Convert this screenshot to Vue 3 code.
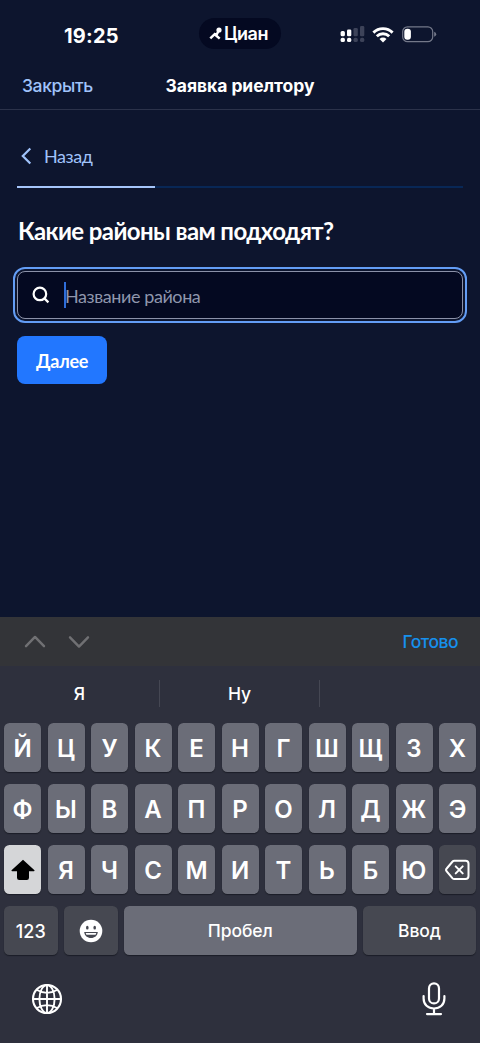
<script setup>
const rows = [
  [...'ЙЦУКЕНГШЩЗХ'],
  [...'ФЫВАПРОЛДЖЭ'],
]
const lastRow = [...'ЯЧСМИТЬБЮ']
</script>

<template>
  <div class="phone">
    <header class="status">
      <span class="time">19:25</span>
      <div class="island">
        <svg width="15" height="14" viewBox="0 0 15 14">
          <path d="M1.3 11.400 5.700 7.200l5 4.400M5.600 7.300h2.200L9.800 3.500" fill="none" stroke="#fff" stroke-width="2.500" />
          <circle cx="10" cy="3" r="2.600" fill="#fff" />
        </svg>
        <span>Циан</span>
      </div>
      <div class="indicators">
        <svg class="signal" width="25" height="17" viewBox="0 0 25 17">
          <g fill="#fff">
            <rect x=".6" y="5" width="4.3" height="5.2" rx="1.5" />
            <rect x="7" y="3.5" width="4.3" height="6.7" rx="1.3" />
            <rect x=".6" y="11.8" width="4.3" height="4.3" rx="1.7" />
            <rect x="7" y="11.8" width="4.3" height="4.3" rx="1.7" />
          </g>
          <g fill="#3d4359">
            <rect x="13.5" y="2" width="4.3" height="8.2" rx="1.3" />
            <rect x="20" y=".1" width="4.3" height="10.1" rx="1.3" />
            <rect x="13.5" y="11.8" width="4.3" height="4.3" rx="1.7" />
            <rect x="20" y="11.8" width="4.3" height="4.3" rx="1.7" />
          </g>
        </svg>
        <svg class="wifi" width="22" height="16" viewBox="0 0 22 16">
          <g fill="none" stroke="#fff" stroke-width="2.9">
            <path d="M1.4 5.6a13.7 13.7 0 0 1 19.2 0" />
            <path d="M4.8 9.3a8.8 8.8 0 0 1 12.4 0" />
          </g>
          <path d="M11 15.6 7.5 12a5 5 0 0 1 7 0z" fill="#fff" />
        </svg>
        <svg class="battery" width="35" height="17" viewBox="0 0 35 17">
          <rect x=".7" y=".8" width="30" height="14.9" rx="4.8" fill="none" stroke="#737889" stroke-width="1.2" />
          <path d="M32.2 5.8q2 .8 2 2.5t-2 2.5z" fill="#737889" />
          <rect x="2.3" y="2.7" width="6.6" height="11" rx="3" fill="#fff" />
        </svg>
      </div>
    </header>

    <nav class="nav">
      <span class="close">Закрыть</span>
      <h1>Заявка риелтору</h1>
    </nav>

    <main class="content">
      <div class="back">
        <svg width="12" height="18" viewBox="0 0 12 18"><path d="M10.300 1.500 2.800 9l7.500 7.500" fill="none" stroke="#a0c3fb" stroke-width="2.2" /></svg>
        <span>Назад</span>
      </div>
      <div class="progress"><div class="done"></div></div>
      <h2>Какие районы вам подходят?</h2>
      <div class="field">
        <svg width="18" height="18" viewBox="0 0 18 18"><g fill="none" stroke="#fff" stroke-width="2.200"><circle cx="7.9" cy="7.9" r="6.3" /><path d="m12.4 12.4 4 4" /></g></svg>
        <i class="caret"></i>
        <span class="hint">Название района</span>
      </div>
      <button class="next">Далее</button>
    </main>

    <section class="keyboard">
      <div class="toolbar">
        <svg width="66" height="16" viewBox="0 0 66 16">
          <g fill="none" stroke="#707073" stroke-width="2.400" stroke-linecap="round" stroke-linejoin="round">
            <path d="m2 12.2 9-9.3 9 9.3M46 3.300l9 9.3 9-9.3" />
          </g>
        </svg>
        <span>Готово</span>
      </div>
      <div class="suggestions"><span>Я</span><span>Ну</span><span></span></div>
      <div class="keys">
        <div v-for="(row, i) in rows" :key="i" class="row">
          <div v-for="k in row" :key="k" class="key letter">{{ k }}</div>
        </div>
        <div class="row">
          <div class="key shift">
            <svg width="24" height="22" viewBox="0 0 24 22"><path d="M12 .8 23.2 11q1 1.3-.4 1.3H18v6.4q0 2.3-2.2 2.3H8.2Q6 21 6 18.700V12.300H1.200Q-.2 12.300.8 11z" fill="#000" /></svg>
          </div>
          <div v-for="k in lastRow" :key="k" class="key letter">{{ k }}</div>
          <div class="key dark erase">
            <svg width="25" height="22" viewBox="0 0 25 22">
              <g fill="none" stroke="#fff" stroke-width="2" stroke-linecap="round" stroke-linejoin="round">
                <path d="M9.300 1.700h11.200q3 0 3 3v12.400q0 3-3 3H9.300q-1 0-1.700-.7L1.700 12.300q-1.300-1.400 0-2.800l5.900-7q.7-.8 1.700-.8z" />
                <path d="m10.700 7.400 7 7m0-7-7 7" />
              </g>
            </svg>
          </div>
        </div>
        <div class="row bottom">
          <div class="key dark num">123</div>
          <div class="key dark emoji">
            <svg width="24" height="24" viewBox="0 0 24 24">
              <circle cx="12" cy="12" r="11.300" fill="#fff" />
              <ellipse cx="8.300" cy="8.700" rx="1.300" ry="1.900" fill="#464851" />
              <ellipse cx="15.700" cy="8.700" rx="1.300" ry="1.900" fill="#464851" />
              <path d="M5.200 13h13.600c-.3 3.700-3.200 6-6.800 6s-6.500-2.300-6.800-6z" fill="#464851" />
              <path d="M6.700 14h10.600l-.7 1.700H7.400z" fill="#fff" />
            </svg>
          </div>
          <div class="key space">Пробел</div>
          <div class="key dark enter">Ввод</div>
        </div>
      </div>
      <footer class="system">
        <svg width="32" height="32" viewBox="0 0 32 32">
          <g fill="none" stroke="#fff" stroke-width="1.900">
            <circle cx="16" cy="16" r="14" stroke-width="2.100" />
            <ellipse cx="16" cy="16" rx="7.600" ry="14" />
            <path d="M16 2v28M2 16h28M5.500 6.800q10.500 6.200 21 0M5.500 25.200q10.500-6.200 21 0" />
          </g>
        </svg>
        <svg width="24" height="34" viewBox="0 0 24 34">
          <g fill="none" stroke="#fff" stroke-width="2.200" stroke-linecap="round">
            <rect x="7" y="1.400" width="10" height="20" rx="5" />
            <path d="M1.600 14v2.500c0 6 4.400 10 10.400 10s10.400-4 10.400-10V14M12 26.500V32M5 32.100h14" />
          </g>
        </svg>
      </footer>
    </section>
  </div>
</template>

<style>
body { background: #0d152e; }
</style>

<style scoped>
* { box-sizing: border-box; }
.phone {
  width: 480px;
  height: 1043px;
  display: flex;
  flex-direction: column;
  overflow: hidden;
  background: #0d152e;
  color: #fff;
  font-family: Inter, "Liberation Sans", sans-serif;
}
h1, h2 { margin: 0; }
svg { display: block; flex: none; }
.status { height: 64px; display: grid; grid-template-columns: 199px 82px 1fr; align-items: start; }
.time { padding: 24px 0 0 64px; font-size: 20px; line-height: 24px; font-weight: 700; letter-spacing: .2px; }
.island { height: 31px; margin-top: 18px; border-radius: 16px; background: #040921; display: flex; align-items: center; padding-left: 10px; font-size: 18px; font-weight: 600; letter-spacing: -.5px; }
.indicators { display: flex; align-items: center; padding: 26px 0 0 59px; }
.wifi { margin-left: 7px; }
.battery { margin-left: 8px; }
.nav { height: 46px; display: grid; grid-template-columns: 1fr auto 1fr; align-items: center; padding: 0 22px 2px; border-bottom: 1px solid #2b324a; }
.close { color: #a0c3fb; font-size: 17.500px; font-weight: 450; letter-spacing: -.35px; }
h1 { font-size: 17.500px; font-weight: 700; letter-spacing: -.05px; }
.content { flex: 1; padding: 0 17px; font-family: Lato, "Open Sans", sans-serif; }
.back { height: 76px; padding: 16px 0 0 3px; display: flex; align-items: center; gap: 12px; color: #a0c3fb; font-size: 18px; letter-spacing: -.45px; }
.progress { height: 2px; background: #082756; }
.done { width: 138px; height: 2px; background: #a5c5fa; }
h2 { height: 83px; display: flex; align-items: center; font-size: 24px; font-weight: 700; letter-spacing: -.6px; padding: 1px 0 0 1px; }
.field { height: 48px; display: flex; align-items: center; padding-left: 14px; border: 1px solid #8b91a8; border-radius: 8px; background: #040921; outline: 2px solid #639df5; outline-offset: 2px; }
.caret { width: 2px; height: 26px; margin-left: 14px; background: #2f6dda; }
.hint { color: #8f96ad; font-size: 18px; margin-left: -1px; padding-top: 2px; letter-spacing: -.42px; }
.next { width: 90px; height: 48px; margin-top: 17px; padding: 2px 0 0; border: 0; border-radius: 8px; background: #2277ff; color: #fff; font: 700 18px Lato, "Open Sans", sans-serif; letter-spacing: -.3px; display: block; }
.keyboard { height: 426px; background: #2e303d; }
.toolbar { height: 49px; background: #333438; display: flex; justify-content: space-between; align-items: center; padding: 0 22px 0 24px; color: #1690ed; font-size: 17.500px; font-weight: 450; letter-spacing: -.5px; }
.suggestions { height: 57px; display: grid; grid-template-columns: repeat(3, 1fr); align-items: center; padding-bottom: 2px; text-align: center; font-size: 17.500px; font-weight: 500; }
.suggestions span { height: 27px; line-height: 27px; border-right: 1px solid #454753; }
.suggestions span:last-child { border: 0; }
.keys { display: grid; gap: 12px; padding: 0 4px; }
.row { height: 49px; display: grid; grid-template-columns: repeat(11, 1fr); gap: 6.500px; }
.key { display: flex; align-items: center; justify-content: center; min-width: 0; border-radius: 5.500px; background: #6b6d78; box-shadow: 0 1px 1px #1b1d27; font-size: 24px; font-weight: 600; }
.letter { padding-top: 2px; }
.shift, .erase { padding-top: 1px; }
.dark { background: #464851; }
.shift { background: #d5d6d8; }
.bottom { grid-template-columns: 53.500px 53.500px 1fr 113px; }
.bottom .key { font-size: 17.500px; font-weight: 500; }
.bottom .num { font-size: 18px; padding-top: 2px; }
.space, .enter { padding-bottom: 1px; letter-spacing: -.1px; }
.emoji { padding-top: 1px; }
.system { display: flex; justify-content: space-between; align-items: center; padding: 27px 34px 0 30.500px; }
</style>
